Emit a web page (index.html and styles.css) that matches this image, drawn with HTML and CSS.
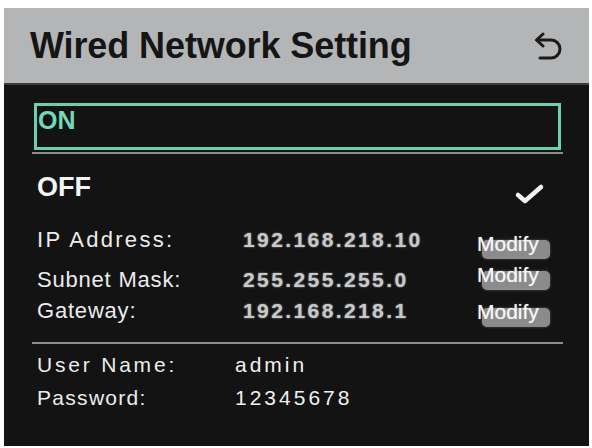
FILE: index.html
```html
<!DOCTYPE html>
<html lang="en">
<head>
    <meta charset="UTF-8">
    <meta name="viewport" content="width=device-width, initial-scale=1.0">
    <title>Wired Network Setting</title>
    <link rel="stylesheet" href="styles.css">
</head>
<body>
    <div class="screen">
        <div class="header">
            <h1 class="title">Wired Network Setting</h1>
            <svg class="back-icon" width="30" height="30" viewBox="0 0 30 30">
                <path d="M11 2 L4.5 8 L11 14" fill="none" stroke="#1a1a1a" stroke-width="3" stroke-linecap="round" stroke-linejoin="round"/>
                <path d="M5 8 H19 a9 9 0 0 1 0 18 H8" fill="none" stroke="#1a1a1a" stroke-width="3" stroke-linecap="round"/>
            </svg>
        </div>

        <div class="content">
            <div class="option-on">ON</div>
            <div class="divider"></div>

            <div class="option-off">
                <span>OFF</span>
                <svg class="check" width="32" height="24" viewBox="0 0 32 24">
                    <path d="M4 13 L11 19 L27 5" fill="none" stroke="#f2f2f2" stroke-width="4.5" stroke-linecap="round" stroke-linejoin="round"/>
                </svg>
            </div>

            <div class="row row-ip">
                <span class="label wide">IP Address:</span>
                <span class="value">192.168.218.10</span>
                <button class="modify"><span>Modify</span></button>
            </div>
            <div class="row row-mask">
                <span class="label">Subnet Mask:</span>
                <span class="value">255.255.255.0</span>
                <button class="modify"><span>Modify</span></button>
            </div>
            <div class="row row-gw">
                <span class="label">Gateway:</span>
                <span class="value">192.168.218.1</span>
                <button class="modify"><span>Modify</span></button>
            </div>

            <div class="divider divider-low"></div>

            <div class="account account-user">
                <span class="label wide">User Name:</span>
                <span class="account-value">admin</span>
            </div>
            <div class="account">
                <span class="label">Password:</span>
                <span class="account-value">12345678</span>
            </div>
        </div>
    </div>
</body>
</html>
```

FILE: styles.css
```css
body {
    margin: 0;
    background: #fff;
    font-family: 'Liberation Sans', Arial, sans-serif;
}

.screen {
    margin: 8px 3px 0 4px;
    height: 438px;
    display: flex;
    flex-direction: column;
    background: #131313;
}

.header {
    height: 75px;
    background: #b4b5b7;
    border-bottom: 2px solid #3c3c3c;
    display: flex;
    align-items: center;
    justify-content: space-between;
    padding: 0 27px 0 26px;
}

.title {
    margin: 0;
    font-size: 36px;
    font-weight: bold;
    color: #151515;
    letter-spacing: -0.1px;
}

.back-icon {
    margin-top: 2px;
}

.content {
    flex: 1;
    padding: 18px 26px 0 28px;
    display: flex;
    flex-direction: column;
}

.option-on {
    height: 41px;
    border: 3px solid #6ccfae;
    margin: 0 2px 0 2px;
    color: #72d8b7;
    font-weight: bold;
    font-size: 25px;
    line-height: 29px;
    padding-left: 1px;
}

.divider {
    height: 2px;
    background: #8c8c8c;
    margin-top: 2px;
}

.option-off {
    height: 66px;
    display: flex;
    align-items: center;
    justify-content: space-between;
    padding: 0 17px 0 5px;
    color: #f4f4f4;
    font-size: 27px;
    font-weight: bold;
}

.check {
    margin-top: 14px;
}

.row {
    display: flex;
    align-items: center;
    height: 40px;
    padding-left: 5px;
}

.row-gw {
    height: 21px;
}

.label {
    width: 206px;
    color: #ececec;
    font-size: 22px;
    letter-spacing: 0.8px;
}

.label.wide {
    letter-spacing: 2.3px;
}

.value {
    width: 239px;
    color: #c9c9c9;
    font-size: 21px;
    font-weight: bold;
    letter-spacing: 2.4px;
    text-shadow: 0 0 2px rgba(210,210,210,0.7);
}

.modify {
    width: 68px;
    height: 19px;
    border: none;
    border-radius: 5px;
    padding: 0;
    background: #8b8b8b;
    box-shadow: 0 0 3px rgba(150,150,150,0.5);
    display: flex;
    align-items: flex-start;
}

.modify span {
    display: block;
    margin: -7px 0 0 -5px;
    color: #f6f6f6;
    font-family: 'Liberation Sans', Arial, sans-serif;
    font-size: 21px;
    line-height: 21px;
    text-shadow: 0 0 1px rgba(255,255,255,0.6);
}

.row-ip .modify {
    margin-top: 18px;
}

.row-gw .modify {
    margin-top: 13px;
}

.divider-low {
    margin-top: 21px;
}

.account {
    display: flex;
    align-items: center;
    height: 33px;
    padding-left: 5px;
}

.account-user {
    margin-top: 4px;
}

.account .label {
    width: 198px;
    font-size: 21px;
    letter-spacing: 1.3px;
}

.account .label.wide {
    letter-spacing: 2.8px;
}

.account-value {
    color: #f0f0f0;
    font-size: 21px;
    letter-spacing: 3px;
}
```
